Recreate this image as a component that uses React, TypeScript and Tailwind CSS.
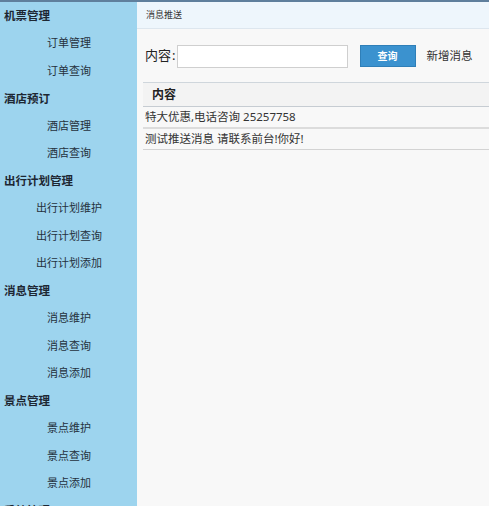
import React from "react";

const menu: { title: string; items: string[] }[] = [
  { title: "机票管理", items: ["订单管理", "订单查询"] },
  { title: "酒店预订", items: ["酒店管理", "酒店查询"] },
  { title: "出行计划管理", items: ["出行计划维护", "出行计划查询", "出行计划添加"] },
  { title: "消息管理", items: ["消息维护", "消息查询", "消息添加"] },
  { title: "景点管理", items: ["景点维护", "景点查询", "景点添加"] },
  { title: "系统管理", items: [] },
];

export default function App() {
  return (
    <div
      className="w-[499px] h-[506px] overflow-hidden bg-white"
      style={{ fontFamily: '"Noto Sans", "Noto Sans CJK SC", sans-serif' }}
    >
      <div className="w-[489px] h-[506px] flex flex-col">
        <div className="h-[2px] bg-[#5f7f9c] shrink-0" />
        <div className="flex flex-1 min-h-0">
          <div className="w-[137px] shrink-0 bg-[#9dd4ee] overflow-hidden">
            {menu.map((g) => (
              <div key={g.title}>
                <div className="h-[27.5px] flex items-center pl-[4px] text-[11.5px] font-bold text-[#1d2733]">
                  {g.title}
                </div>
                {g.items.map((it) => (
                  <div
                    key={it}
                    className="h-[27.5px] flex items-center justify-center pl-[1px] text-[11px] text-[#25313d]"
                  >
                    {it}
                  </div>
                ))}
              </div>
            ))}
          </div>
          <div className="flex-1 bg-[#f8f8f8] flex flex-col">
            <div className="h-[27px] bg-[#eef6fc] border-b border-[#dde6ee] flex items-center pl-[9px] text-[9px] text-[#333]">
              消息推送
            </div>
            <div className="flex items-center h-[24px] mt-[15px] pl-[8px]">
              <span className="text-[13px] text-[#222]">内容</span>
              <span className="text-[13px] text-[#222] ml-[1px]">:</span>
              <input
                className="ml-[1px] w-[171px] h-[23px] bg-white border border-[#cfcfcf] outline-none"
                type="text"
              />
              <button className="ml-[12px] w-[56px] h-[22px] bg-[#3b92cf] border border-[#2f7fb8] text-white text-[10px] font-bold">
                查询
              </button>
              <span className="ml-[11px] text-[11.5px] text-[#333]">新增消息</span>
            </div>
            <div className="mt-[14px] ml-[6px] border-t border-[#cfd6dc]">
              <div className="h-[24px] bg-[#f3f3f3] border-b border-[#c6ccd2] flex items-center pl-[9px] text-[12px] font-bold text-[#222]">
                内容
              </div>
              <div className="h-[22px] border-b-2 border-[#dcdcdc] flex items-center pl-[2px] text-[11.5px] text-[#333]">
                特大优惠,电话咨询 25257758
              </div>
              <div className="h-[21px] border-b border-[#d3d3d3] flex items-center pl-[2px] text-[11.5px] text-[#333]">
                测试推送消息 请联系前台!你好!
              </div>
            </div>
          </div>
        </div>
      </div>
    </div>
  );
}
